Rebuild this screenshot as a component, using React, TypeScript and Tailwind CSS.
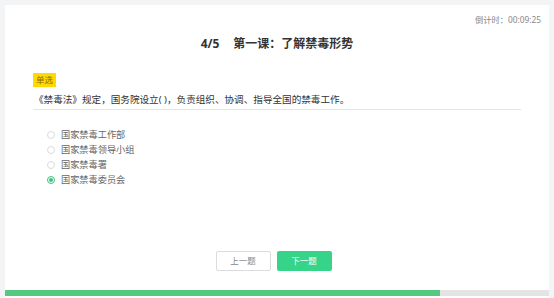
const options = ["国家禁毒工作部", "国家禁毒领导小组", "国家禁毒署", "国家禁毒委员会"];

export default function App() {
  const selected = 3;
  const progress = 434 / 543;

  return (
    <div
      className="w-[554px] h-[298px] bg-[#f3f4f6] overflow-hidden"
      style={{ fontFamily: '"Noto Sans", "Noto Sans CJK SC", sans-serif' }}
    >
      <div className="ml-[5px] mt-[5px] w-[544px] h-[293px] bg-white flex flex-col">
        {/* Timer */}
        <div className="flex justify-end pr-[8px] pt-[10px] h-[25px] leading-none">
          <span className="text-[8.3px] leading-[10px] text-[#888]">倒计时：00:09:25</span>
        </div>

        {/* Title */}
        <div className="flex justify-center mt-[6px] h-[16px]">
          <h1 className="text-[12px] leading-[16px] font-bold text-[#333]">
            4/5<span className="inline-block w-[14px]" />第一课：了解禁毒形势
          </h1>
        </div>

        {/* Question */}
        <div className="px-[28px] mt-[21px] flex flex-col">
          <span className="block w-fit bg-[#ffd900] text-[#8a6a00] text-[8.5px] leading-[14px] px-[3px] h-[14px]">
            单选
          </span>
          <p className="mt-[6px] pl-[1px] text-[9.6px] leading-[14px] text-[#333] pb-[2px] border-b border-[#e5e5e5]">
            《禁毒法》规定，国务院设立( )，负责组织、协调、指导全国的禁毒工作。
          </p>
        </div>

        {/* Options */}
        <div className="pl-[42px] mt-[19px] flex flex-col gap-[4px]">
          {options.map((o, i) => (
            <label key={o} className="flex items-center gap-[6px] h-[11px]">
              {i === selected ? (
                <span className="w-[8px] h-[8px] rounded-full border border-[#3ac27e] flex items-center justify-center">
                  <span className="w-[4px] h-[4px] rounded-full bg-[#3ac27e]" />
                </span>
              ) : (
                <span className="w-[8px] h-[8px] rounded-full border border-[#dcdcdc]" />
              )}
              <span className="text-[9.2px] leading-[11px] text-[#666]">{o}</span>
            </label>
          ))}
        </div>

        {/* Buttons */}
        <div className="flex justify-center gap-[6px] mt-[66px] pr-[7px]">
          <button className="w-[55px] h-[20px] border border-[#dcdcdc] rounded-[2px] bg-white text-[8.5px] text-[#888]">
            上一题
          </button>
          <button className="w-[55px] h-[20px] rounded-[2px] bg-[#36d489] text-[8.5px] text-white">
            下一题
          </button>
        </div>

        {/* Progress */}
        <div className="mt-auto mb-[2px] h-[6px] bg-[#e4e4e4]">
          <div className="h-full bg-[#55c97f]" style={{ width: `${progress * 100}%` }} />
        </div>
      </div>
    </div>
  );
}
